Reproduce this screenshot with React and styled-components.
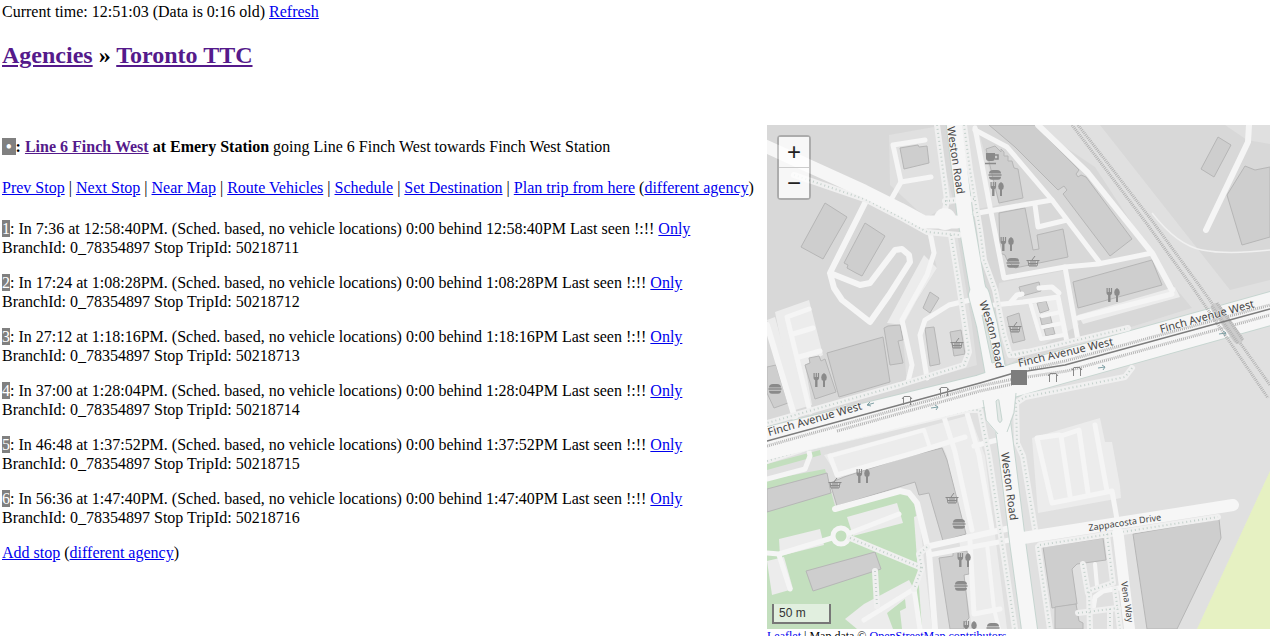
import React from "react";
import styled, { createGlobalStyle } from "styled-components";

const links = ["Prev Stop", "Next Stop", "Near Map", "Route Vehicles", "Schedule", "Set Destination"];

const predictions = [
    { wait: "7:36", time: "12:58:40PM", trip: "50218711" },
    { wait: "17:24", time: "1:08:28PM", trip: "50218712" },
    { wait: "27:12", time: "1:18:16PM", trip: "50218713" },
    { wait: "37:00", time: "1:28:04PM", trip: "50218714" },
    { wait: "46:48", time: "1:37:52PM", trip: "50218715" },
    { wait: "56:36", time: "1:47:40PM", trip: "50218716" },
];

// landuse
const commercial = [
    "265,0 333,0 463,165 503,155 503,504 0,504 0,325 203,270 240,240 361,203 425,183 402,155 328,42",
    "122,10 167,2 187,78 160,92 150,85 123,60",
    "160,108 190,108 205,200 210,240 140,260 135,200 170,143",
    "458,0 480,15 503,19 503,0",
    "232,158 300,145 312,200 240,240 228,200",
    "195,0 210,0 232,80 205,85",
];

const parks = [
    "0,355 58,344 68,381 133,364 147,374 163,504 0,504",
    "0,339 53,325 54,330 0,345",
];

const parking = [
    "157,130 170,143 150,175 136,200 120,198",
    "8,187 42,175 56,230 38,240 45,280 28,285",
    "0,195 8,192 32,280 24,284",
    "57,330 203,290 218,331 240,504 205,504 180,331 175,320 70,350",
    "265,313 333,293 338,317 345,317 353,361 354,373 271,388",
    "262,180 292,170 299,208 273,216",
    "311,190 408,162 413,172 316,199",
    "80,392 130,378 136,398 86,411",
    "12,414 53,404 57,420 13,431",
    "0,436 17,432 26,464 5,470",
    "78,494 97,479 142,455 147,464 153,504 90,504",
    "147,392 152,390 165,504 155,504",
];

const buildings = [
    "58,78 80,92 56,134 34,122",
    "98,98 118,111 95,151 89,148 80,143 81,140 77,138",
    "133,23 151,20 152,22 160,21 162,38 137,44",
    "219,24 228,21 234,27 234,24 237,27 237,31 241,31 241,36 245,36 247,43 251,44 256,73 232,78",
    "232,88 258,83 266,125 272,124 270,110 296,104 301,132 248,143 240,135 238,130 233,128",
    "248,0 268,0 312,45 309,49 311,52 314,50 319,52 365,114 343,131 296,69 300,65 297,61 291,65 248,22 222,0",
    "306,157 385,135 395,160 311,183",
    "252,162 272,157 274,166 255,171",
    "451,12 464,20 447,52 434,44",
    "478,41 488,45 503,42 503,112 475,120 460,70",
    "0,242 9,240 21,278 7,283 0,268",
    "38,240 43,238 42,233 52,231 54,236 58,234 69,267 48,274",
    "60,228 116,212 123,257 72,272",
    "117,203 121,201 133,200 136,215 131,216 136,238 123,240",
    "163,167 172,173 163,188 156,183",
    "158,203 167,202 173,239 163,241",
    "183,207 194,205 198,229 187,231",
    "240,192 252,188 258,215 246,218",
    "270,178 279,176 282,185 273,188",
    "273,192 283,190 285,198 275,200",
    "277,204 286,202 288,209 279,211",
    "0,364 60,348 64,368 0,387",
    "63,358 77,352 135,333 175,323 180,335 199,409 176,416 162,368 152,370 148,357 70,381",
    "172,433 186,431 186,427 200,426 202,449 197,450 202,493 197,498 197,504 183,504",
    "39,446 108,427 114,444 46,466",
    "366,409 452,394 454,413 410,504 380,504",
    "276,422 336,413 339,435 310,439 305,444 310,479 285,483",
    "288,482 309,479 312,496 316,498 316,504 288,504",
];

// [width, points]
const service = [
    [5, "158,15 126,20 134,57 164,52"],
    [5, "134,57 125,73"],
    [6, "98,78 63,148 67,163 75,175 103,197 122,170 143,137 142,130 135,124 128,125 103,158 93,160 63,148"],
    [5, "163,107 167,128 160,150 135,195 145,240 141,257"],
    [5, "203,175 182,180 158,195 153,210 160,253"],
    [5, "208,3 223,82 237,153 298,142 331,139 385,128"],
    [5, "208,5 240,22 285,75 333,138"],
    [6, "271,0 321,48 385,128 405,165"],
    [5, "200,90 256,80 285,75"],
    [5, "268,80 271,102 300,95"],
    [5, "298,142 311,215"],
    [5, "227,180 256,177 291,172 300,217"],
    [4, "263,177 274,214 297,210"],
    [4, "275,191 294,187"],
    [4, "276,202 296,198"],
    [5, "243,178 250,170 255,169"],
    [5, "272,163 285,162 292,168"],
    [5, "311,193 405,169"],
    [6, "482,0 481,17 439,105"],
    [6, "0,200 28,293"],
    [5, "42,184 20,192 43,287"],
    [5, "26,209 46,203"],
    [5, "32,232 53,226"],
    [5, "0,354 38,344 43,331 40,318"],
    [5, "63,331 70,350 150,327 198,312"],
    [4, "63,331 157,305 162,320"],
    [5, "177,292 188,327 205,405"],
    [5, "200,288 212,330 225,404"],
    [5, "207,321 230,315"],
    [5, "203,416 207,489 233,484"],
    [4, "220,419 227,484 232,504"],
    [5, "292,310 270,313 285,378 345,366 351,400"],
    [5, "294,311 303,371"],
    [5, "294,311 312,305 321,368"],
    [5, "328,300 340,366"],
    [5, "0,428 12,429 65,413"],
    [5, "83,408 132,389"],
    [5, "12,430 23,464"],
    [6, "68,384 133,366 142,368 150,378 162,428 168,504"],
    [6, "163,421 248,402"],
    [5, "162,430 248,414"],
    [5, "147,464 153,504"],
    [5, "147,464 97,495"],
    [4, "328,439 330,461"],
    [5, "352,463 336,466 328,472 326,484"],
];

const footways = [
    "27,50 100,75 133,92 160,107 192,110",
    "170,0 180,75 177,90",
    "184,110 192,160 202,227 197,240 133,260 0,298",
    "197,0 203,45 213,105 217,135 228,165 237,210 243,230 258,227",
    "178,76 207,74",
    "248,230 361,203",
    "0,336 40,323 200,285 213,285 222,331 248,504",
    "365,243 358,252 258,272 249,278 250,318 256,331 268,404",
    "273,420 451,392",
    "340,409 346,458 322,466 323,504",
    "271,422 283,504",
    "316,439 321,468",
    "311,488 351,483",
    "343,484 343,504",
    "348,464 353,504",
    "83,413 155,443",
    "160,422 152,429 155,443 147,464",
    "108,446 110,481",
];

const mainRoads = [
    [13, "-4,20 97,66 133,84 157,97 190,97"],
    [15, "187,-3 198,90 210,160 220,200 232,250"],
    [20, "212,170 220,200 229,250"],
    [15, "232,270 240,331 251,420 263,508"],
    [32, "-6,320 215,266 248,255 509,182"],
];

const sideRoads = [
    [12, "256,413 466,380"],
    [11, "351,408 363,508"],
];

const pois = [
    ["food", 230, 64], ["food", 240, 119], ["food", 346, 170], ["food", 53, 255],
    ["food", 96, 351], ["food", 197, 435], ["food", 203, 503],
    ["burger", 228, 50], ["burger", 246, 138], ["burger", 8, 264],
    ["burger", 192, 399], ["burger", 194, 461], ["burger", 226, 503],
    ["basket", 266, 137], ["basket", 190, 219], ["basket", 248, 203],
    ["basket", 68, 359], ["basket", 185, 374],
    ["cafe", 225, 33],
    ["shelter", 140, 275], ["shelter", 177, 266], ["shelter", 286, 252], ["shelter", 310, 246],
];

const roadLabels = [
    { text: "Finch Avenue West", path: "M2 311L110 280" },
    { text: "Finch Avenue West", path: "M252 242L360 217" },
    { text: "Finch Avenue West", path: "M394 208L503 178" },
    { text: "Weston Road", path: "M180 2L192 84" },
    { text: "Weston Road", path: "M212 178Q226 210 230 255" },
    { text: "Weston Road", path: "M234 328L245 410" },
    { text: "Zappacosta Drive", path: "M322 406L410 393", small: true },
    { text: "Vena Way", path: "M354 457L362 510", small: true },
];

const Symbols = () => (
    <defs>
        <g id="food" fill="#8a8a8a">
            <path d="M-6.500-7h1.200v4h1v-4h1.200v4h1v-4h1.200v5q0 1.500-1.600 2.300V7h-2.400V.3q-1.600-.8-1.600-2.300z" />
            <path d="M4-7q2.800 1.200 2.800 4.200T5 .8V7H3V.8Q1.200 0 1.200-2.800T4-7z" />
        </g>
        <g id="burger" fill="#8a8a8a">
            <path d="M-6-1.500q0-3.500 4-3.500h4q4 0 4 3.500z" />
            <path d="M-6.500-.7h13v1.500h-13zM-6 1.700H6q0 3-3 3h-6q-3 0-3-3z" />
        </g>
        <g id="basket" fill="none" stroke="#8a8a8a">
            <path d="M-6.500-1.500h13M-5-1L-4 4h8l1-5M-4 1.500h8M-2-1v5M0-1v5M2-1v5M-1-2L2-6" />
        </g>
        <g id="cafe">
            <path d="M-6-5h9v5q0 3-3 3h-3q-3 0-3-3z" fill="#8a8a8a" />
            <path d="M3-3h3v4H3M-7 5.500H4" fill="none" stroke="#8a8a8a" strokeWidth="1.500" />
        </g>
        <g id="shelter" fill="none" stroke="#888">
            <path d="M-5-1L-3-3.500h6L5-1M-3.500-3v8M3.500-3v8" />
        </g>
    </defs>
);

const MapDrawing = () => (
    <Drawing viewBox="0 0 503 504" preserveAspectRatio="xMidYMid slice" role="img" aria-label="Map of Emery Station">
        <Symbols />
        <rect width="503" height="504" fill="#d8d8d8" />
        {commercial.map((p) => <polygon key={p} points={p} fill="#e0e0e0" />)}
        <polygon points="503,346 503,504 430,504" fill="#e6f1c2" />
        {parks.map((p) => <polygon key={p} points={p} fill="#c3dfbe" />)}
        {parking.map((p) => <polygon key={p} points={p} fill="#ececec" />)}
        <polygon points="120,488 138,474 139,483 133,486 135,504 126,504" fill="#c3dfbe" />

        {buildings.map((p) => <polygon key={p} points={p} fill="#cecece" stroke="#b6b6b6" />)}
        {service.map(([w, p]) => <Line key={p} points={p} stroke="#f5f5f5" strokeWidth={w} />)}
        <circle cx="74" cy="411" r="8" fill="#c3dfbe" stroke="#f5f5f5" strokeWidth="5" />

        {mainRoads.slice(1).map(([w, p]) => <Line key={p} points={p} stroke="#c6d5d0" strokeWidth={w + 2} />)}
        {footways.map((p) => <Line key={p} points={p} stroke="#f0f0f0" strokeWidth="6" />)}
        {footways.map((p) => <Dots key={p} points={p} />)}
        {sideRoads.map(([w, p]) => <Line key={p} points={p} stroke="#f6f6f6" strokeWidth={w} />)}
        {mainRoads.map(([w, p]) => <Line key={p} points={p} stroke="#f6f6f6" strokeWidth={w} />)}
        <circle cx="178" cy="94" r="11" fill="#f6f6f6" />
        <polygon points="216,273 250,264 246,288 239,310 231,310 220,297" fill="#f6f6f6" />
        <path d="M216 275l3 20 12 14M249 268l-2 20-7 19" fill="none" stroke="#c6d5d0" />
        <path d="M229 276q3-3 3 0l3 19q-2 5-4 0z" fill="#e4e9e7" stroke="#c6d5d0" />
        <path d="M215 190l3 2 10 45-3 1z" fill="#dde3e0" stroke="#c6d5d0" />

        <path d="M385 88Q410 120 435 125T503 125" fill="none" stroke="#f0f0f0" strokeWidth="1.500" />
        <Rail points="305,0 340,46 380,99 426,163 501,273" />
        <Rail points="311,0 346,45 386,97 432,160 503,260" />
        <Rail points="0,321 213,261 247,254 300,246 503,190" />
        <Rail points="70,306 213,266 246,259" />
        <Rail points="262,244 298,236 503,180" />
        <Line points="449,183 471,214" stroke="#cccccc" strokeWidth="10" />
        <Rail points="445,181 471,218" />
        <Rail points="450,178 476,215" />
        <Line points="0,316 213,258 247,248 298,240 503,184" stroke="#7c7c7c" strokeWidth="1.600" />

        <g fill="none" stroke="#7fa0a5">
            <path d="M107 278l-7 2M103 277l-3 3 4 1" />
            <path d="M164 283l7-1M168 280l3 2-2 3" />
            <path d="M331 243l7-1M335 240l3 2-2 3" />
            <path d="M452 209l7-1M456 206l3 2-2 3" />
        </g>
        {pois.map(([kind, x, y]) => <use key={`${x}-${y}`} href={`#${kind}`} x={x} y={y} />)}
        {roadLabels.map(({ text, path, small }, i) => (
            <RoadName key={path} $small={small}>
                <path id={`road-${i}`} d={path} fill="none" stroke="none" />
                <text><textPath href={`#road-${i}`}>{text}</textPath></text>
            </RoadName>
        ))}
        <rect x="244" y="245" width="16" height="15" fill="#7d7d7d" />
    </Drawing>
);

const App = () => {
    return (
        <>
            <GlobalStyle />
            <header>
                <div>Current time: 12:51:03 (Data is 0:16 old) <Link href="#refresh">Refresh</Link></div>
                <Title><Link href="#agencies" $visited>Agencies</Link> » <Link href="#ttc" $visited>Toronto TTC</Link></Title>
            </header>

            <Columns>
                <Stop>
                    <p>
                        <b><Badge>&nbsp;•&nbsp;</Badge>: <Link href="#line6" $visited>Line 6 Finch West</Link> at Emery Station</b> going Line 6 Finch West towards Finch West Station
                    </p>
                    <nav>
                        {links.map((name) => (
                            <React.Fragment key={name}><Link href="#nav">{name}</Link> | </React.Fragment>
                        ))}
                        <Link href="#plan">Plan trip from here</Link> (<Link href="#plan-agency">different agency</Link>)
                    </nav>
                    <List>
                        {predictions.map(({ wait, time, trip }, i) => (
                            <li key={trip}>
                                <Badge>{i + 1}</Badge>: In {wait} at {time}. (Sched. based, no vehicle locations) 0:00 behind {time} Last seen !:!! <Link href="#only">Only</Link>
                                <div>BranchId: 0_78354897 Stop TripId: {trip}</div>
                            </li>
                        ))}
                        <li><Link href="#add">Add stop</Link> (<Link href="#add-agency">different agency</Link>)</li>
                    </List>
                </Stop>

                <div>
                    <MapBox>
                        <MapDrawing />
                        <Zoom>
                            <ZoomButton type="button" aria-label="Zoom in">+</ZoomButton>
                            <ZoomButton type="button" aria-label="Zoom out">−</ZoomButton>
                        </Zoom>
                        <Scale>50 m</Scale>
                    </MapBox>
                    <Credit><Link href="#leaflet">Leaflet</Link> | Map data © <Link href="#osm">OpenStreetMap contributors</Link></Credit>
                </div>
            </Columns>
        </>
    )
}

const GlobalStyle = createGlobalStyle`
    html {
        scrollbar-width: none;
    }

    body {
        margin: 2px;
        background: #fff;
        color: #000;
        font: 16px/19px "Liberation Serif", "Times New Roman", serif;
    }
`

const Link = styled.a`
    color: ${(p) => (p.$visited ? "#551a8b" : "#0000ee")};
    text-decoration: underline;
`

const Title = styled.h2`
    margin: 20px 0 56px;
    font-size: 24px;
    line-height: 28px;
`

const Columns = styled.main`
    display: grid;
    grid-template-columns: 765fr 503fr;
    padding-right: 8px;
`

const Stop = styled.section`
    display: flex;
    flex-direction: column;
    gap: 22px;
    padding-top: 12px;

    p {
        margin: 0;
    }
`

const List = styled.ul`
    display: flex;
    flex-direction: column;
    gap: 16px;
    margin: 0;
    padding: 0;
    list-style: none;
`

const Badge = styled.span`
    background: #808080;
    color: #fff;
`

const MapBox = styled.div`
    position: relative;
    height: 504px;
    overflow: hidden;
`

const Drawing = styled.svg`
    display: block;
    width: 100%;
    height: 100%;
`

const Line = styled.polyline`
    fill: none;
    stroke-linecap: round;
    stroke-linejoin: round;
`

const Dots = styled.polyline`
    fill: none;
    stroke: #c3d0cb;
    stroke-width: 2;
    stroke-dasharray: 1 3;
`

const Rail = styled.polyline`
    fill: none;
    stroke: #b4b4b4;
    stroke-width: 3;
    stroke-dasharray: 1 1;
`

const RoadName = styled.g`
    font: ${(p) => (p.$small ? 9 : 11)}px "Noto Sans", sans-serif;
    fill: #444;
    stroke: #f6f6f6;
    stroke-width: 1;
    paint-order: stroke;
`

const Zoom = styled.div`
    position: absolute;
    top: 10px;
    left: 10px;
    display: flex;
    flex-direction: column;
    border: 2px solid rgba(0, 0, 0, 0.2);
    border-radius: 4px;
    background-clip: padding-box;
`

const ZoomButton = styled.button`
    width: 30px;
    height: 30px;
    padding: 0;
    border: 0;
    background: rgba(255, 255, 255, 0.8);
    color: #222;
    font: 24px/30px "Liberation Sans", Arial, sans-serif;

    & + & {
        border-top: 1px solid #ccc;
        height: 31px;
    }
`

const Scale = styled.div`
    position: absolute;
    bottom: 5px;
    left: 5px;
    width: 50px;
    padding: 0 0 0 5px;
    border: 2px solid #777;
    border-top: 0;
    background: rgba(255, 255, 255, 0.5);
    color: #333;
    font: 12px/18px "Liberation Sans", Arial, sans-serif;
`

const Credit = styled.div`
    font-size: 12px;
    line-height: 14px;
`

export default App;
